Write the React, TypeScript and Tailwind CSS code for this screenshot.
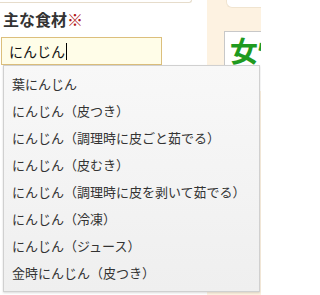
import React from "react";

const items = [
  "葉にんじん",
  "にんじん（皮つき）",
  "にんじん（調理時に皮ごと茹でる）",
  "にんじん（皮むき）",
  "にんじん（調理時に皮を剥いて茹でる）",
  "にんじん（冷凍）",
  "にんじん（ジュース）",
  "金時にんじん（皮つき）",
];

export default function App() {
  return (
    <div
      className="relative w-[261px] h-[295px] overflow-hidden bg-white"
      style={{ fontFamily: '"Noto Sans CJK JP", "Noto Sans", sans-serif' }}
    >
      <div className="flex h-full w-[261px]">
        <div className="w-[207px] shrink-0 flex flex-col">
          <div className="w-[192px] h-[3px] border-b border-r border-[#e6dccb] rounded-br-[4px] bg-white" />
          <div className="mt-[6px] pl-[3px] h-[20px] leading-[20px] text-[16px] font-bold text-[#333333] whitespace-nowrap">
            主な食材<span className="text-[#b01818]">※</span>
          </div>
          <div className="mt-[8px] ml-[1px] w-[161px] h-[28px] border border-[#dcbf7c] bg-[#fffde8] flex items-center pl-[7px]">
            <span className="text-[14px] leading-[18px] text-[#111]">にんじん</span>
            <span className="w-[1px] h-[17px] bg-black ml-[1px]" />
          </div>
        </div>
        <div className="w-[54px] min-w-0 shrink-0 bg-[#fdf2e1] flex flex-col">
          <div className="ml-[19px] h-[8px] bg-white border-l border-b border-[#f0e4d0] rounded-bl-[6px]" />
          <div className="mt-[23px] ml-[17px] h-[60px] border-l border-t border-[#c8c8c8] bg-white overflow-hidden pl-[5px] pt-[1px]">
            <div className="w-[80px] text-[28px] leading-[34px] font-bold text-[#1f9a1f] whitespace-nowrap">女性</div>
          </div>
        </div>
      </div>

      <div className="absolute left-[3px] top-[65px] w-[257px] h-[227px] border border-[#d0d0d0] bg-gradient-to-b from-[#f8f8f8] to-[#efefef] shadow-[0_1px_2px_rgba(0,0,0,0.15)] py-[4px]">
        {items.map((t) => (
          <div
            key={t}
            className="h-[27px] leading-[27px] pl-[8px] text-[13px] text-[#333333] whitespace-nowrap"
          >
            {t}
          </div>
        ))}
      </div>
    </div>
  );
}
